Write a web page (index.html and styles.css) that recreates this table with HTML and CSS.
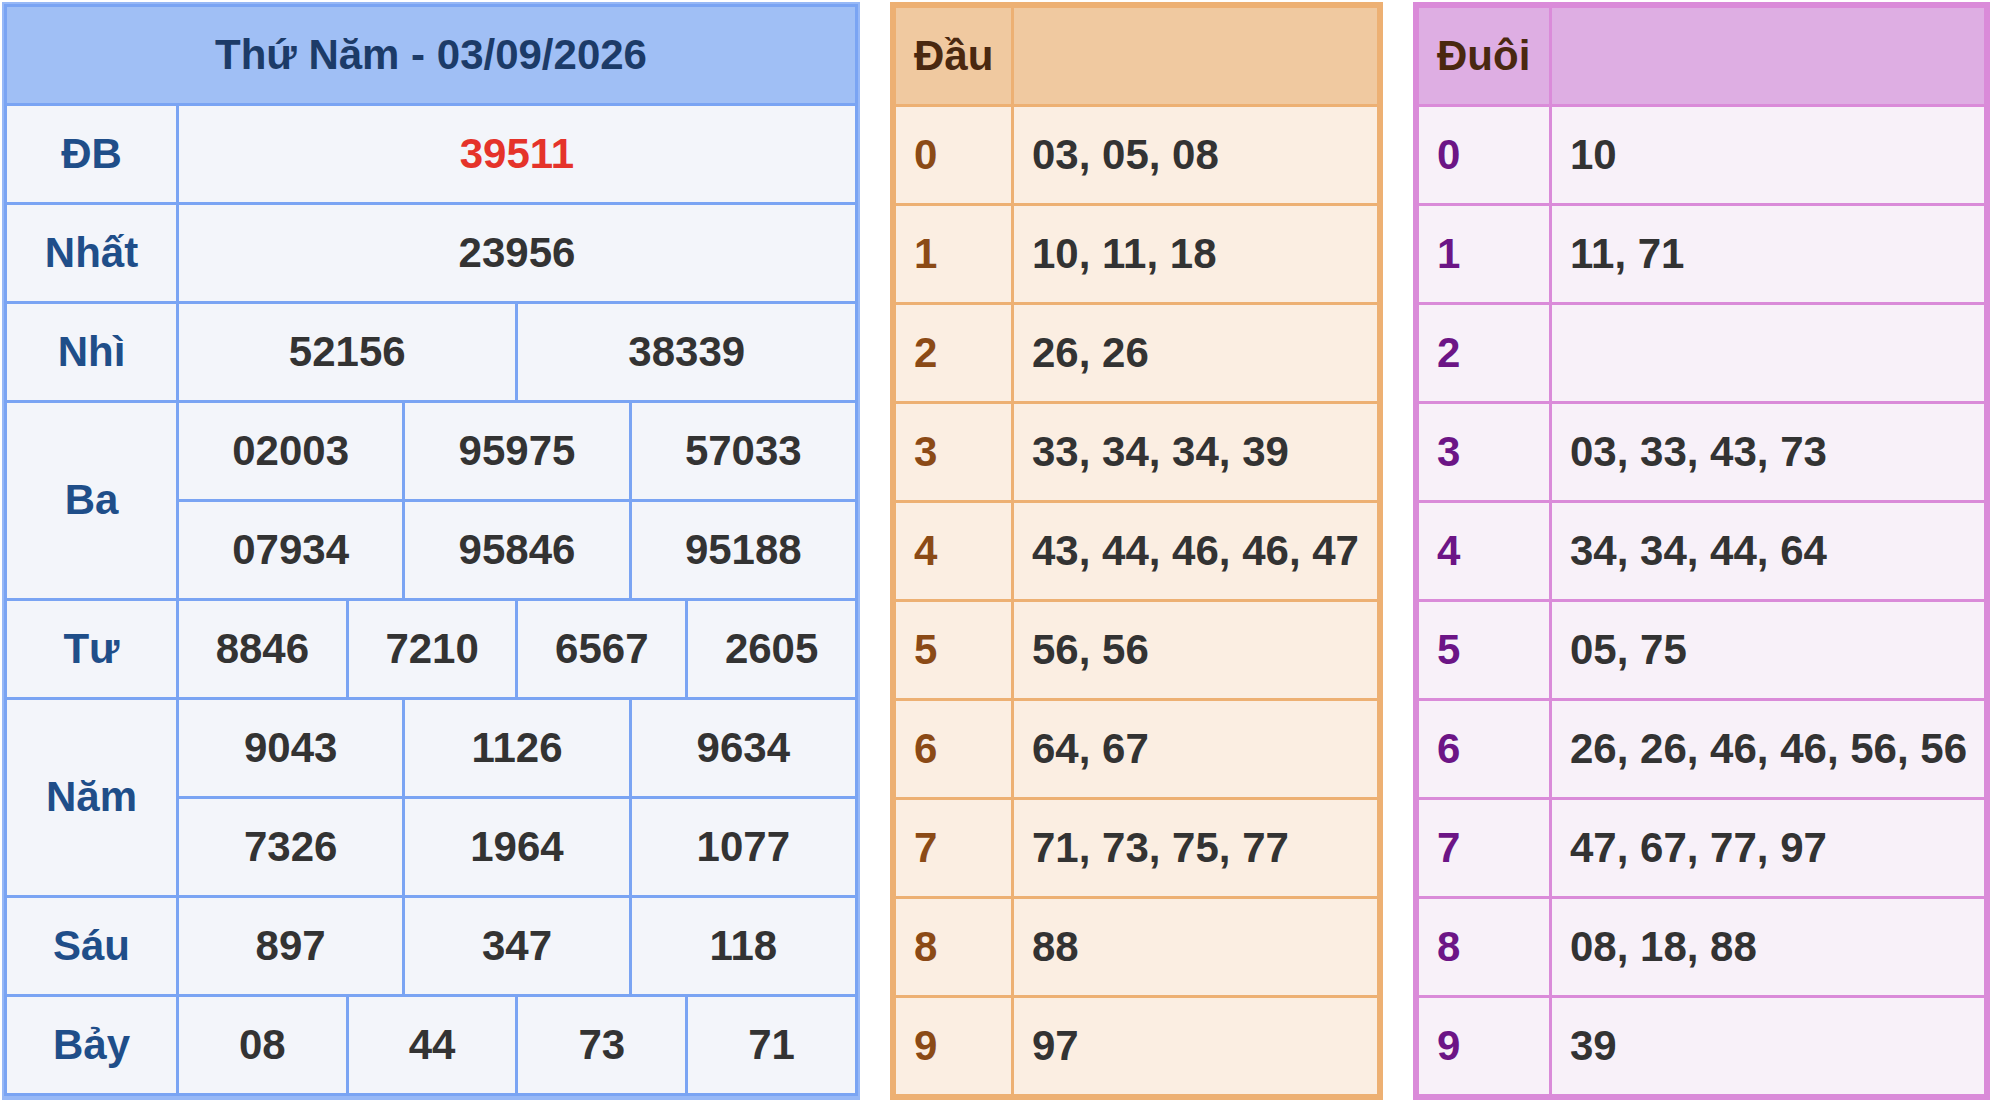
FILE: index.html
```html
<!DOCTYPE html>
<html lang="vi">
<head>
<meta charset="utf-8">
<title>Kết quả xổ số - Thứ Năm 03/09/2026</title>
<link rel="stylesheet" href="styles.css">
</head>
<body>
<div class="page">
  <div class="box box-kq">
    <table class="tbl kq">
      <colgroup>
        <col class="c-label">
        <col><col><col><col><col><col><col><col><col><col><col><col>
      </colgroup>
      <tr class="head"><th colspan="13">Thứ Năm - 03/09/2026</th></tr>
      <tr><td class="lbl">ĐB</td><td colspan="12" class="num red">39511</td></tr>
      <tr><td class="lbl">Nhất</td><td colspan="12" class="num">23956</td></tr>
      <tr><td class="lbl">Nhì</td><td colspan="6" class="num">52156</td><td colspan="6" class="num">38339</td></tr>
      <tr><td class="lbl" rowspan="2">Ba</td><td colspan="4" class="num">02003</td><td colspan="4" class="num">95975</td><td colspan="4" class="num">57033</td></tr>
      <tr><td colspan="4" class="num">07934</td><td colspan="4" class="num">95846</td><td colspan="4" class="num">95188</td></tr>
      <tr><td class="lbl">Tư</td><td colspan="3" class="num">8846</td><td colspan="3" class="num">7210</td><td colspan="3" class="num">6567</td><td colspan="3" class="num">2605</td></tr>
      <tr><td class="lbl" rowspan="2">Năm</td><td colspan="4" class="num">9043</td><td colspan="4" class="num">1126</td><td colspan="4" class="num">9634</td></tr>
      <tr><td colspan="4" class="num">7326</td><td colspan="4" class="num">1964</td><td colspan="4" class="num">1077</td></tr>
      <tr><td class="lbl">Sáu</td><td colspan="4" class="num">897</td><td colspan="4" class="num">347</td><td colspan="4" class="num">118</td></tr>
      <tr><td class="lbl">Bảy</td><td colspan="3" class="num">08</td><td colspan="3" class="num">44</td><td colspan="3" class="num">73</td><td colspan="3" class="num">71</td></tr>
    </table>
  </div>

  <div class="box box-dau">
    <table class="tbl lt dau">
      <colgroup><col class="c-dau"><col></colgroup>
      <tr class="head"><th>Đầu</th><th></th></tr>
      <tr><td class="k">0</td><td class="v">03, 05, 08</td></tr>
      <tr><td class="k">1</td><td class="v">10, 11, 18</td></tr>
      <tr><td class="k">2</td><td class="v">26, 26</td></tr>
      <tr><td class="k">3</td><td class="v">33, 34, 34, 39</td></tr>
      <tr><td class="k">4</td><td class="v">43, 44, 46, 46, 47</td></tr>
      <tr><td class="k">5</td><td class="v">56, 56</td></tr>
      <tr><td class="k">6</td><td class="v">64, 67</td></tr>
      <tr><td class="k">7</td><td class="v">71, 73, 75, 77</td></tr>
      <tr><td class="k">8</td><td class="v">88</td></tr>
      <tr><td class="k">9</td><td class="v">97</td></tr>
    </table>
  </div>

  <div class="box box-duoi">
    <table class="tbl lt duoi">
      <colgroup><col class="c-duoi"><col></colgroup>
      <tr class="head"><th>Đuôi</th><th></th></tr>
      <tr><td class="k">0</td><td class="v">10</td></tr>
      <tr><td class="k">1</td><td class="v">11, 71</td></tr>
      <tr><td class="k">2</td><td class="v"></td></tr>
      <tr><td class="k">3</td><td class="v">03, 33, 43, 73</td></tr>
      <tr><td class="k">4</td><td class="v">34, 34, 44, 64</td></tr>
      <tr><td class="k">5</td><td class="v">05, 75</td></tr>
      <tr><td class="k">6</td><td class="v">26, 26, 46, 46, 56, 56</td></tr>
      <tr><td class="k">7</td><td class="v">47, 67, 77, 97</td></tr>
      <tr><td class="k">8</td><td class="v">08, 18, 88</td></tr>
      <tr><td class="k">9</td><td class="v">39</td></tr>
    </table>
  </div>
</div>
</body>
</html>
```

FILE: styles.css
```css
* { box-sizing: border-box; }

html, body {
  margin: 0;
  padding: 0;
  background: #ffffff;
}

body {
  font-family: "Liberation Sans", Arial, sans-serif;
  font-weight: bold;
  font-size: 42px;
  color: #333333;
}

.page {
  display: flex;
  align-items: flex-start;
  gap: 30px;
  padding: 2px;
}

.box {
  height: 1098px;
}

.box-kq {
  width: 858px;
  border: 2px solid #97b8f6;
  background: #97b8f6;
}

.box-dau {
  width: 493px;
  border: 3px solid #edb073;
  background: #edb073;
}

.box-duoi {
  width: 577px;
  border: 3px solid #da8bd9;
  background: #da8bd9;
}

.tbl {
  width: 100%;
  border-collapse: collapse;
  table-layout: fixed;
}

.tbl th,
.tbl td {
  padding: 0;
  white-space: nowrap;
  vertical-align: middle;
  line-height: 1.15;
}

.tbl tr { height: 99px; }
.tbl tr.head { height: 99px; }

/* Kết quả table */
.kq .c-label { width: 172px; }

.kq th,
.kq td {
  border: 3px solid #7aa4f3;
  text-align: center;
}

.kq th {
  background: #a0bff5;
  color: #1c3b68;
}

.kq td {
  background: #f3f5fa;
}

.kq .lbl { color: #1f4e89; }
.kq .num { color: #333333; }
.kq .red { color: #e5332a; }

/* Loto head / tail tables */
.lt th,
.lt td {
  text-align: left;
  padding-left: 18px;
}

.dau .c-dau { width: 118px; }
.duoi .c-duoi { width: 133px; }

.dau th,
.dau td { border: 3px solid #edb073; }
.dau th { background: #f0c9a0; color: #4a2810; }
.dau td { background: #fbeee2; }
.dau .k { color: #8b4a16; }

.duoi th,
.duoi td { border: 3px solid #da8bd9; }
.duoi th { background: #deaee3; color: #4a2810; }
.duoi td { background: #f8f1f9; }
.duoi .k { color: #6c1586; }

.lt .v { color: #333333; }
```
